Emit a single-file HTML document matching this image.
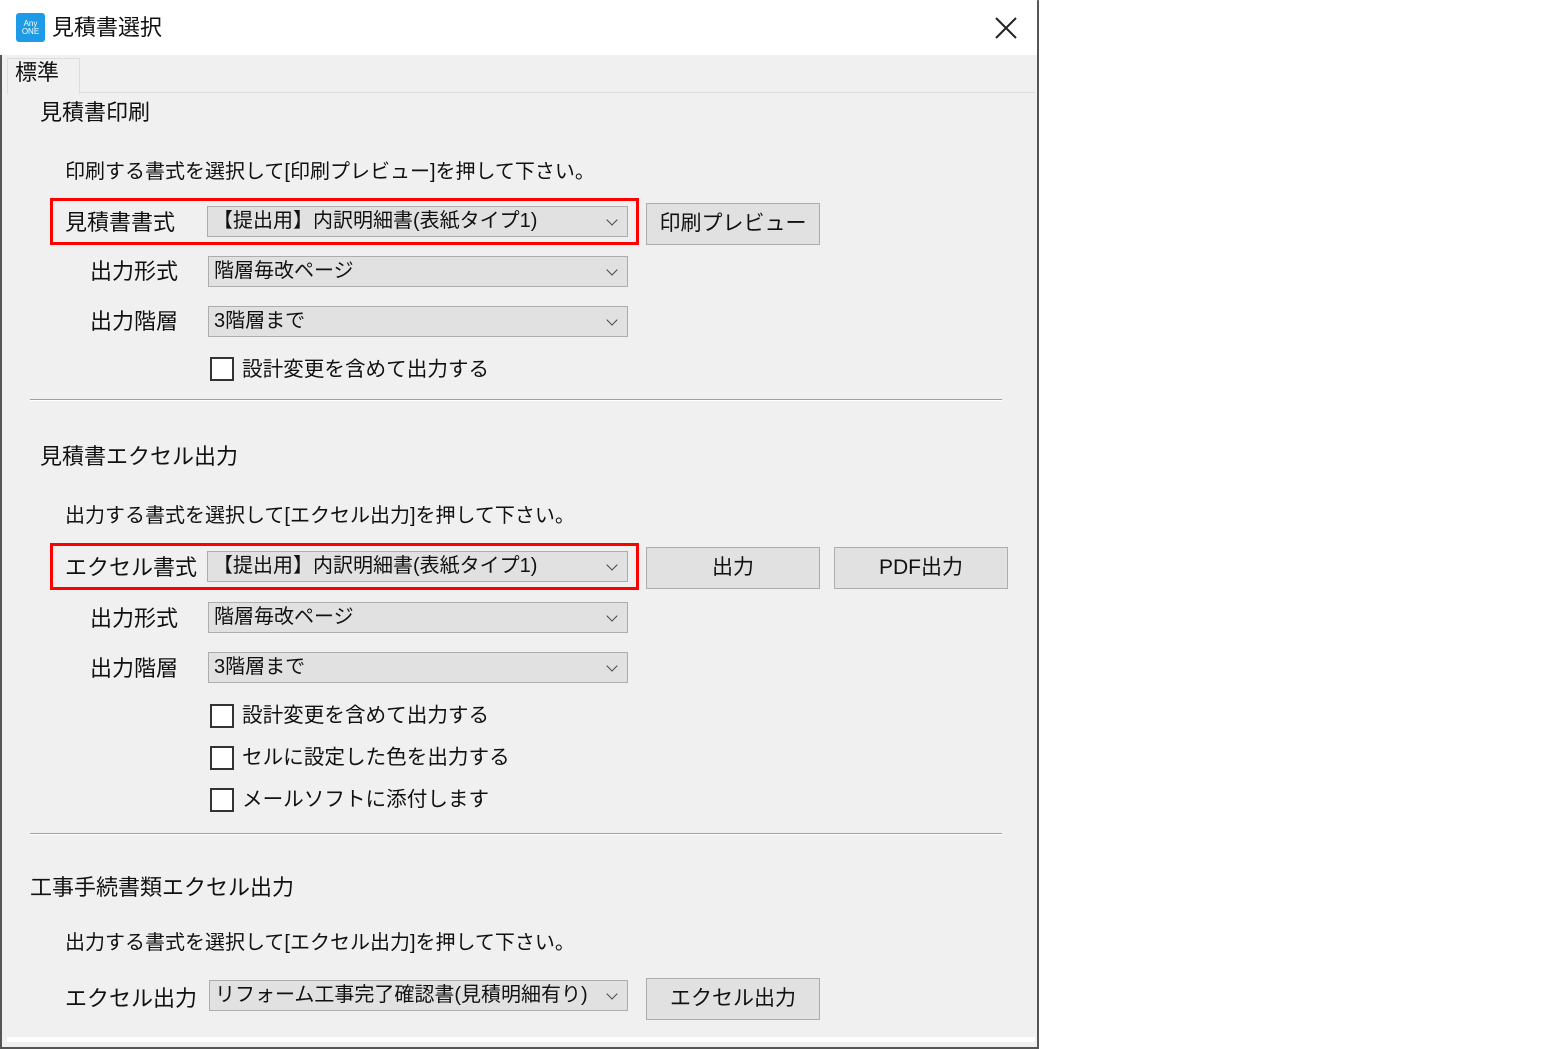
<!DOCTYPE html>
<html><head><meta charset="utf-8"><style>
*{margin:0;padding:0;box-sizing:border-box}
body{width:1559px;height:1049px;background:#fff;position:relative;overflow:hidden;font-family:"Liberation Sans","Noto Sans CJK JP",sans-serif;font-size:20px;color:#111}
.a{position:absolute;white-space:nowrap;line-height:24px}
.l{font-size:22px}
.win{position:absolute;left:0;top:0;width:1039px;height:1049px;border:2px solid #555;border-top:1px solid #888;background:#f0f0f0}
.title{position:absolute;left:0;top:0;width:1037px;height:55px;background:#fff}
.panel{position:absolute;left:7px;top:92px;width:1028px;height:950px;background:#f0f0f0;border-top:1px solid #dcdcdc;border-bottom:5px solid #fff}
.sel{position:absolute;background:#e1e1e1;border:1px solid #adadad;height:31px;line-height:29px;padding-left:5px;white-space:nowrap;overflow:hidden}
.sel:after{content:"";position:absolute;right:11px;top:9px;width:7px;height:7px;border-right:1px solid #444;border-bottom:1px solid #444;transform:rotate(45deg)}
.btn{position:absolute;background:#e1e1e1;border:1px solid #adadad;text-align:center;line-height:40px;font-size:21px}
.red{position:absolute;border:3px solid #f00}
.cb{position:absolute;width:24px;height:24px;border:2px solid #333;background:#fff}
.c{font-size:20.6px}
.hr{position:absolute;left:30px;width:972px;height:2px;border-top:1px solid #a0a0a0;border-bottom:1px solid #fff}
</style></head><body>
<div class="win"></div>
<div class="title"></div>
<div style="position:absolute;left:16px;top:13px;width:29px;height:29px;background:#1e9be6;border-radius:3px;color:#fff;font-size:8px;line-height:8px;text-align:center;padding-top:7px">Any<br>ONE</div>
<div class="a" style="left:52px;top:16px;font-size:22px">見積書選択</div>
<svg style="position:absolute;left:995px;top:17px" width="22" height="22"><path d="M1 1L21 21M21 1L1 21" stroke="#222" stroke-width="2"/></svg>
<div style="position:absolute;left:7px;top:58px;width:73px;height:36px;background:#f0f0f0;border:1px solid #dcdcdc;border-bottom:none;z-index:2"></div>
<div class="panel"></div>
<div class="a l" style="left:15px;top:61px;z-index:3">標準</div>

<div class="a l" style="left:40px;top:101px">見積書印刷</div>
<div class="a" style="left:65px;top:160px">印刷する書式を選択して[印刷プレビュー]を押して下さい。</div>
<div class="red" style="left:50px;top:198px;width:589px;height:47px"></div>
<div class="a l" style="left:65px;top:211px">見積書書式</div>
<div class="sel" style="left:207px;top:206px;width:421px">【提出用】内訳明細書(表紙タイプ1)</div>
<div class="btn" style="left:646px;top:203px;width:174px;height:42px">印刷プレビュー</div>
<div class="a l" style="left:90px;top:260px">出力形式</div>
<div class="sel" style="left:208px;top:256px;width:420px">階層毎改ページ</div>
<div class="a l" style="left:90px;top:310px">出力階層</div>
<div class="sel" style="left:208px;top:306px;width:420px">3階層まで</div>
<div class="cb" style="left:210px;top:357px"></div>
<div class="a c" style="left:242px;top:358px">設計変更を含めて出力する</div>
<div class="hr" style="top:399px"></div>

<div class="a l" style="left:40px;top:445px">見積書エクセル出力</div>
<div class="a" style="left:65px;top:504px">出力する書式を選択して[エクセル出力]を押して下さい。</div>
<div class="red" style="left:50px;top:543px;width:589px;height:47px"></div>
<div class="a l" style="left:65px;top:556px">エクセル書式</div>
<div class="sel" style="left:207px;top:551px;width:421px">【提出用】内訳明細書(表紙タイプ1)</div>
<div class="btn" style="left:646px;top:547px;width:174px;height:42px">出力</div>
<div class="btn" style="left:834px;top:547px;width:174px;height:42px">PDF出力</div>
<div class="a l" style="left:90px;top:607px">出力形式</div>
<div class="sel" style="left:208px;top:602px;width:420px">階層毎改ページ</div>
<div class="a l" style="left:90px;top:657px">出力階層</div>
<div class="sel" style="left:208px;top:652px;width:420px">3階層まで</div>
<div class="cb" style="left:210px;top:704px"></div>
<div class="a c" style="left:242px;top:704px">設計変更を含めて出力する</div>
<div class="cb" style="left:210px;top:746px"></div>
<div class="a c" style="left:242px;top:746px">セルに設定した色を出力する</div>
<div class="cb" style="left:210px;top:788px"></div>
<div class="a c" style="left:242px;top:788px">メールソフトに添付します</div>
<div class="hr" style="top:833px"></div>

<div class="a l" style="left:30px;top:876px">工事手続書類エクセル出力</div>
<div class="a" style="left:65px;top:931px">出力する書式を選択して[エクセル出力]を押して下さい。</div>
<div class="a l" style="left:65px;top:987px">エクセル出力</div>
<div class="sel" style="left:209px;top:980px;width:419px;padding-right:30px">リフォーム工事完了確認書(見積明細有り)</div>
<div class="btn" style="left:646px;top:978px;width:174px;height:42px">エクセル出力</div>
</body></html>
